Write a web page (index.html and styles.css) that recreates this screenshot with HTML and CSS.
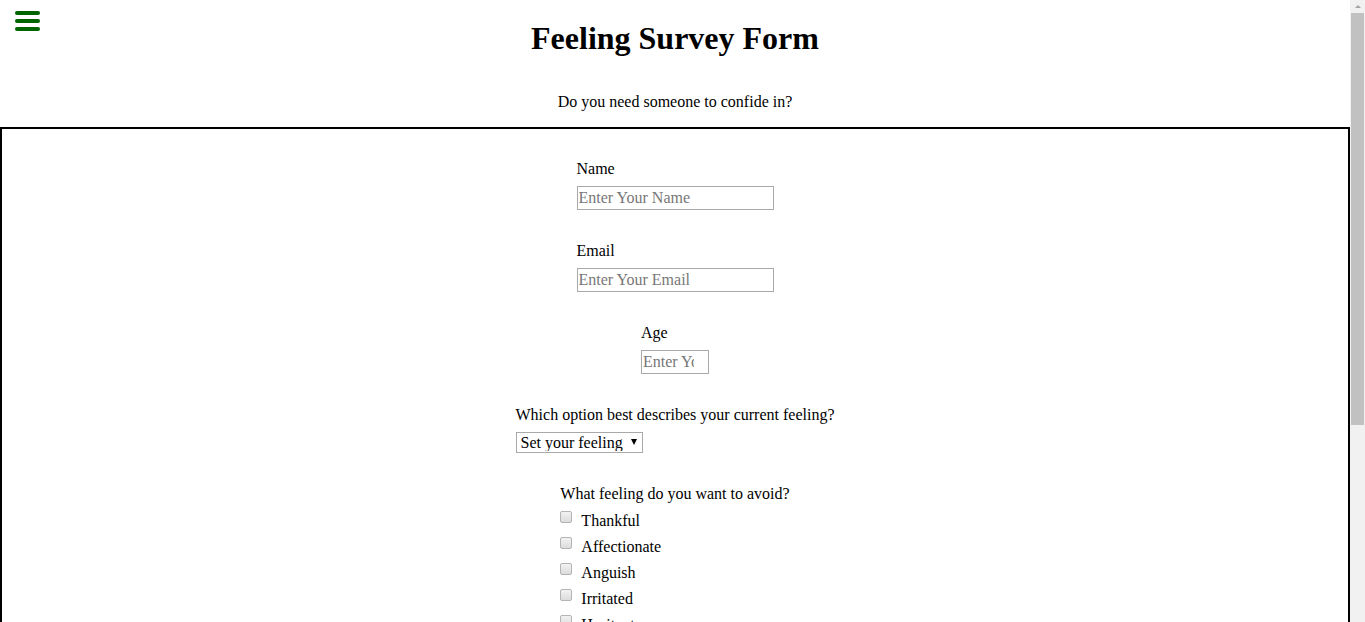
FILE: index.html
```html
<!DOCTYPE html>
<html lang="en">
<head>
<meta charset="utf-8">
<title>Feeling Survey Form</title>
<link rel="stylesheet" href="styles.css">
</head>
<body>
<a class="menu-toggle" href="#" aria-label="Menu">
  <svg width="25" height="20" viewBox="0 0 25 20" aria-hidden="true">
    <rect x="0" y="0" width="25" height="4" rx="2"></rect>
    <rect x="0" y="8" width="25" height="4" rx="2"></rect>
    <rect x="0" y="16" width="25" height="4" rx="2"></rect>
  </svg>
</a>
<header class="page-header">
  <h1 class="title">Feeling Survey Form</h1>
  <p class="description">Do you need someone to confide in?</p>
</header>
<form class="survey">
  <div class="field">
    <label class="field-label" for="name">Name</label>
    <input class="text-input wide" id="name" type="text" placeholder="Enter Your Name">
  </div>
  <div class="field">
    <label class="field-label" for="email">Email</label>
    <input class="text-input wide" id="email" type="email" placeholder="Enter Your Email">
  </div>
  <div class="field">
    <label class="field-label" for="age">Age</label>
    <input class="text-input narrow" id="age" type="text" placeholder="Enter Your Age">
  </div>
  <div class="field">
    <label class="field-label" for="feeling">Which option best describes your current feeling?</label>
    <span class="select-wrap">
      <select class="select" id="feeling">
        <option>Set your feeling</option>
        <option>Happy</option>
        <option>Sad</option>
        <option>Angry</option>
      </select>
    </span>
  </div>
  <div class="checks">
    <p class="checks-title">What feeling do you want to avoid?</p>
    <label class="check-row"><input class="checkbox" type="checkbox">Thankful</label>
    <label class="check-row"><input class="checkbox" type="checkbox">Affectionate</label>
    <label class="check-row"><input class="checkbox" type="checkbox">Anguish</label>
    <label class="check-row"><input class="checkbox" type="checkbox">Irritated</label>
    <label class="check-row"><input class="checkbox" type="checkbox">Hesitant</label>
    <label class="check-row"><input class="checkbox" type="checkbox">Lonely</label>
  </div>
</form>
<div class="scrollbar" aria-hidden="true">
  <div class="scroll-arrow"></div>
  <div class="scroll-thumb"></div>
</div>
</body>
</html>
```

FILE: styles.css
```css
html, body {
  margin: 0;
  padding: 0;
}

body {
  margin-right: 15px;
  font-family: "Liberation Serif", "Times New Roman", serif;
  font-size: 16px;
  color: #000;
  background: #fff;
}

.menu-toggle {
  position: absolute;
  left: 15px;
  top: 11px;
  display: block;
  line-height: 0;
}

.menu-toggle svg {
  fill: #006400;
}

.page-header {
  text-align: center;
}

.title {
  margin: 20px 0 0;
  font-size: 32px;
  font-weight: bold;
}

.description {
  margin: 36px 0 16px;
}

.survey {
  border: 2px solid #000;
  padding-top: 31px;
  padding-bottom: 40px;
}

.field {
  width: fit-content;
  margin: 0 auto 32px;
  display: flex;
  flex-direction: column;
  align-items: flex-start;
  gap: 8px;
}

.field-label {
  display: block;
}

.text-input {
  box-sizing: border-box;
  height: 24px;
  margin: 0;
  padding: 0 1px;
  border: 1px solid #a9a9a9;
  font-family: inherit;
  font-size: 16px;
  color: #000;
  background: #fff;
}

.text-input::placeholder {
  color: #777;
}

.wide {
  width: 197px;
}

.narrow {
  width: 68px;
  padding-right: 14px;
}

.select-wrap {
  position: relative;
  display: block;
}

.select {
  appearance: none;
  -webkit-appearance: none;
  box-sizing: border-box;
  width: 127px;
  height: 21px;
  margin: 0;
  padding: 0 0 0 4px;
  border: 1px solid #a9a9a9;
  border-radius: 0;
  background: #fff;
  font-family: inherit;
  font-size: 16px;
  color: #000;
}

.select-wrap::after {
  content: "";
  position: absolute;
  right: 6px;
  top: 7px;
  border-left: 3.5px solid transparent;
  border-right: 3.5px solid transparent;
  border-top: 6px solid #000;
  pointer-events: none;
}

.checks {
  width: fit-content;
  margin: 0 auto;
}

.checks-title {
  margin: 0 0 5px;
}

.check-row {
  display: block;
  height: 26px;
  line-height: 26px;
}

.checkbox {
  appearance: none;
  -webkit-appearance: none;
  box-sizing: border-box;
  width: 12px;
  height: 12px;
  margin: 0 9px 0 0;
  vertical-align: 3px;
  border: 1px solid #b4b4b4;
  border-radius: 2px;
  background: linear-gradient(#f2f2f2, #dcdcdc);
}

.scrollbar {
  position: fixed;
  top: 0;
  right: 0;
  width: 15px;
  height: 100%;
  background: #f1f1f1;
}

.scroll-arrow {
  width: 0;
  height: 0;
  margin: 5px auto 0;
  border-left: 3.5px solid transparent;
  border-right: 3.5px solid transparent;
  border-bottom: 3.5px solid #a3a3a3;
}

.scroll-thumb {
  margin: 4.5px 1px 0;
  height: 412px;
  background: #c1c1c1;
}
```
